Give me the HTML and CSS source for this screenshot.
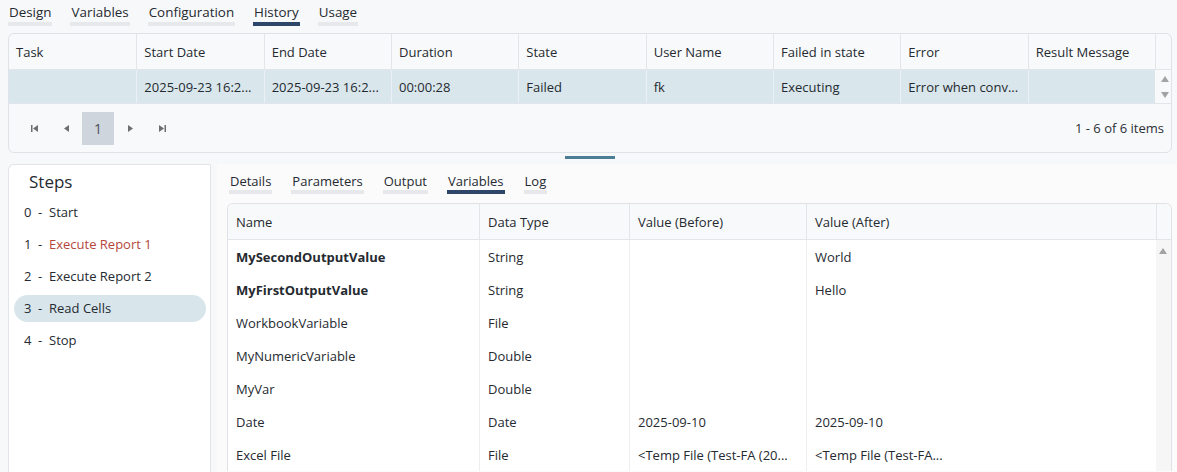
FILE: index.html
```html
<!DOCTYPE html>
<html>
<head>
<meta charset="utf-8">
<link rel="stylesheet" href="styles.css">
</head>
<body>
<div class="tabs top-tabs">
  <div class="tab">Design</div>
  <div class="tab">Variables</div>
  <div class="tab">Configuration</div>
  <div class="tab active">History</div>
  <div class="tab">Usage</div>
</div>

<div class="grid history">
  <div class="row head hrow">
    <div class="cell">Task</div>
    <div class="cell">Start Date</div>
    <div class="cell">End Date</div>
    <div class="cell">Duration</div>
    <div class="cell">State</div>
    <div class="cell">User Name</div>
    <div class="cell">Failed in state</div>
    <div class="cell">Error</div>
    <div class="cell">Result Message</div>
    <div class="cell sb"></div>
  </div>
  <div class="row body hrow selected">
    <div class="cell"></div>
    <div class="cell">2025-09-23 16:2...</div>
    <div class="cell">2025-09-23 16:2...</div>
    <div class="cell">00:00:28</div>
    <div class="cell">Failed</div>
    <div class="cell">fk</div>
    <div class="cell">Executing</div>
    <div class="cell">Error when conv...</div>
    <div class="cell"></div>
    <div class="cell sb arrows">
      <span class="tri up"></span>
      <span class="tri down"></span>
    </div>
  </div>
  <div class="pager">
    <div class="pager-nav">
      <span class="pbtn"><svg width="9" height="9" viewBox="0 0 9 9"><rect x="1" y="1" width="1.5" height="7" fill="#6f6f6f"/><path d="M8 1 L3 4.5 L8 8 Z" fill="#6f6f6f"/></svg></span>
      <span class="pbtn"><svg width="9" height="9" viewBox="0 0 9 9"><path d="M7 1 L2 4.5 L7 8 Z" fill="#6f6f6f"/></svg></span>
      <span class="page">1</span>
      <span class="pbtn"><svg width="9" height="9" viewBox="0 0 9 9"><path d="M2 1 L7 4.5 L2 8 Z" fill="#6f6f6f"/></svg></span>
      <span class="pbtn"><svg width="9" height="9" viewBox="0 0 9 9"><path d="M1 1 L6 4.5 L1 8 Z" fill="#6f6f6f"/><rect x="6.5" y="1" width="1.5" height="7" fill="#6f6f6f"/></svg></span>
    </div>
    <div class="pager-info">1 - 6 of 6 items</div>
  </div>
</div>

<div class="splitter"><span class="handle"></span></div>

<div class="bottom">
  <div class="steps">
    <div class="steps-title">Steps</div>
    <div class="step"><span class="num">0</span><span class="dash">-</span><span>Start</span></div>
    <div class="step error"><span class="num">1</span><span class="dash">-</span><span class="ename">Execute Report 1</span></div>
    <div class="step"><span class="num">2</span><span class="dash">-</span><span>Execute Report 2</span></div>
    <div class="step sel"><span class="num">3</span><span class="dash">-</span><span>Read Cells</span></div>
    <div class="step"><span class="num">4</span><span class="dash">-</span><span>Stop</span></div>
  </div>
  <div class="detail">
    <div class="tabs sub-tabs">
      <div class="tab">Details</div>
      <div class="tab">Parameters</div>
      <div class="tab">Output</div>
      <div class="tab active">Variables</div>
      <div class="tab">Log</div>
    </div>
    <div class="grid vars">
      <div class="row head vrow">
        <div class="cell">Name</div>
        <div class="cell">Data Type</div>
        <div class="cell">Value (Before)</div>
        <div class="cell">Value (After)</div>
        <div class="cell sb"></div>
      </div>
      <div class="vbody">
        <div class="vrows">
          <div class="row vrow"><div class="cell b">MySecondOutputValue</div><div class="cell">String</div><div class="cell"></div><div class="cell">World</div></div>
          <div class="row vrow"><div class="cell b">MyFirstOutputValue</div><div class="cell">String</div><div class="cell"></div><div class="cell">Hello</div></div>
          <div class="row vrow"><div class="cell">WorkbookVariable</div><div class="cell">File</div><div class="cell"></div><div class="cell"></div></div>
          <div class="row vrow"><div class="cell">MyNumericVariable</div><div class="cell">Double</div><div class="cell"></div><div class="cell"></div></div>
          <div class="row vrow"><div class="cell">MyVar</div><div class="cell">Double</div><div class="cell"></div><div class="cell"></div></div>
          <div class="row vrow"><div class="cell">Date</div><div class="cell">Date</div><div class="cell">2025-09-10</div><div class="cell">2025-09-10</div></div>
          <div class="row vrow"><div class="cell">Excel File</div><div class="cell">File</div><div class="cell">&lt;Temp File (Test-FA (20...</div><div class="cell">&lt;Temp File (Test-FA...</div></div>
        </div>
        <div class="vscroll"><span class="tri up"></span></div>
      </div>
    </div>
  </div>
</div>
</body>
</html>
```

FILE: styles.css
```css
* { box-sizing: border-box; }
html, body { margin: 0; padding: 0; }
body {
  width: 1177px;
  height: 472px;
  overflow: hidden;
  background: #f7f8fa;
  font-family: "Open Sans", "Noto Sans", sans-serif;
  font-size: 13px;
  color: #252a30;
}

.tabs { display: flex; }
.tab {
  line-height: 20px;
  padding: 0 1px;
  border-bottom: 4px solid #e6e8eb;
  white-space: nowrap;
}
.tab.active { border-bottom-color: #2d4669; }

.top-tabs {
  padding: 2px 0 0 8px;
  gap: 18px;
  height: 26px;
  font-size: 13.4px;
}

.grid {
  border: 1px solid #dfe2e6;
  background: #f8f9fa;
  overflow: hidden;
}
.history {
  margin: 7px 5px 0 8px;
  border-radius: 6px;
  height: 120px;
}
.row { display: grid; }
.hrow { grid-template-columns: repeat(9, 1fr) 16px; }
.head { height: 36px; border-bottom: 1px solid #e2e5e9; }
.cell {
  padding-left: 7px;
  display: flex;
  align-items: center;
  white-space: nowrap;
  overflow: hidden;
  border-left: 1px solid #e2e5e9;
}
.cell:first-child { border-left: none; }
.row.body { height: 34px; border-bottom: 1px solid #e2e5e9; }
.selected .cell { background: #d9e7ec; border-left-color: #e9f1f4; }
.selected .cell.sb { background: #f8f9fa; border-left: none; }

.arrows {
  flex-direction: column;
  justify-content: center;
  gap: 10px;
  padding-left: 3px;
}
.tri {
  width: 0; height: 0;
  border-left: 4px solid transparent;
  border-right: 4px solid transparent;
  display: block;
}
.tri.up { border-bottom: 6px solid #a3a3a3; }
.tri.down { border-top: 6px solid #a3a3a3; }

.pager {
  display: flex;
  align-items: center;
  justify-content: space-between;
  height: 48px;
  padding: 0 7px 0 9px;
}
.pager-nav { display: flex; align-items: center; }
.pbtn {
  width: 32px; height: 33px;
  display: flex; align-items: center; justify-content: center;
}
.page {
  width: 32px; height: 33px;
  display: flex; align-items: center; justify-content: center;
  background: #ced5dd;
  color: #4a5158;
  font-size: 14px;
}
.pager-info { color: #2b3036; }

.splitter {
  height: 11px;
  display: flex;
  padding-top: 3px;
}
.handle {
  width: 50px; height: 3px;
  background: #4b7d94;
  margin-left: 565px;
}

.bottom {
  display: flex;
  padding-left: 8px;
  gap: 6px;
  height: 308px;
  overflow: hidden;
}
.steps {
  width: 203px;
  flex: none;
  background: #fff;
  border: 1px solid #e1e4e8;
  border-bottom: none;
  border-top-left-radius: 6px;
  border-top-right-radius: 2px;
  padding: 5px 4px 0 5px;
}
.steps-title {
  font-size: 17px;
  line-height: 24px;
  padding-left: 15px;
  margin-bottom: 5px;
}
.step {
  height: 27px;
  line-height: 27px;
  padding-left: 10px;
  margin-bottom: 5px;
  border-radius: 14px;
  white-space: nowrap;
}
.step .num { display: inline-block; width: 14px; }
.step .dash { display: inline-block; width: 11px; }
.step.sel { background: #d8e6ec; }
.step.error .ename { color: #b4473a; }

.detail {
  flex: 1;
  background: #fbfbfc;
  padding: 8px 5px 0 10px;
  overflow: hidden;
}
.sub-tabs { gap: 19px; padding-left: 2px; }
.sub-tabs .tab { line-height: 18px; border-bottom-width: 4px; }

.vars {
  margin-top: 9px;
  border-bottom: none;
  border-radius: 6px 6px 0 0;
  background: #fff;
  height: 268px;
}
.vrow { grid-template-columns: 251px 150px 177px 350px 16px; }
.vars .head { background: #f8f9fa; }
.vars .head .cell { padding-left: 8px; }
.vbody { display: flex; }
.vrows { flex: 1; }
.vrows .vrow { grid-template-columns: 251px 150px 177px 350px; height: 33px; }
.vrows .cell { padding-left: 8px; border-left-color: #eceef1; }
.cell.b { font-weight: 700; }
.vscroll {
  width: 16px;
  flex: none;
  background: #f6f6f7;
  padding: 8px 0 0 3px;
  height: 231px;
}
```
